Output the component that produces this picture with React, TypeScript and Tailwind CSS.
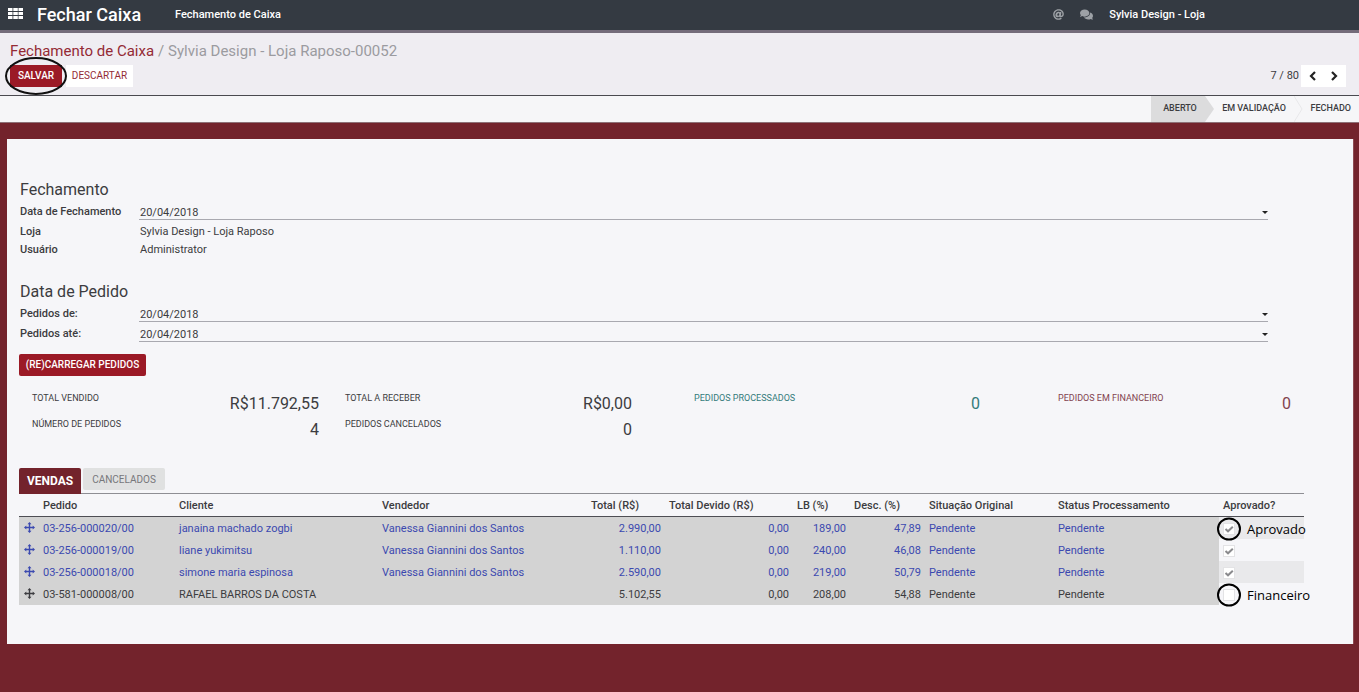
import React from "react";
import { FaAt, FaComments } from "react-icons/fa";

type Order = {
  id: string;
  client: string;
  seller: string;
  total: string;
  due: string;
  lb: string;
  discount: string;
  approved: boolean;
  note?: string;
};

const orders: Order[] = [
  { id: "03-256-000020/00", client: "janaina machado zogbi", seller: "Vanessa Giannini dos Santos", total: "2.990,00", due: "0,00", lb: "189,00", discount: "47,89", approved: true, note: "Aprovado" },
  { id: "03-256-000019/00", client: "liane yukimitsu", seller: "Vanessa Giannini dos Santos", total: "1.110,00", due: "0,00", lb: "240,00", discount: "46,08", approved: true },
  { id: "03-256-000018/00", client: "simone maria espinosa", seller: "Vanessa Giannini dos Santos", total: "2.590,00", due: "0,00", lb: "219,00", discount: "50,79", approved: true },
  { id: "03-581-000008/00", client: "RAFAEL BARROS DA COSTA", seller: "", total: "5.102,55", due: "0,00", lb: "208,00", discount: "54,88", approved: false, note: "Financeiro" },
];

const headers = ["Pedido", "Cliente", "Vendedor", "Total (R$)", "Total Devido (R$)", "LB (%)", "Desc. (%)", "Situação Original", "Status Processamento", "Aprovado?"];

function MoveIcon() {
  return (
    <svg viewBox="0 0 11 11" className="mx-auto h-[11px] w-[11px]" fill="currentColor" aria-hidden="true">
      <path d="M5.500 0 7.500 2.300H6.200V4.800H8.700V3.500L11 5.500 8.700 7.500V6.200H6.200V8.700H7.500L5.500 11 3.500 8.700H4.800V6.200H2.300V7.500L0 5.500 2.300 3.500V4.800H4.800V2.300H3.500z" />
    </svg>
  );
}

function Chevron({ d }: { d: string }) {
  return (
    <svg viewBox="0 0 8 10" className="h-2.5 w-2" fill="none" stroke="currentColor" strokeWidth="2.2" aria-hidden="true">
      <path d={d} />
    </svg>
  );
}

function DateField({ id, label }: { id: string; label: string }) {
  return (
    <div className="flex h-5 items-start">
      <label htmlFor={id} className="w-[119px] shrink-0 pt-0.5 leading-4 font-medium">{label}</label>
      <div className="flex h-[18px] min-w-0 flex-1 items-center border-b border-[#a9a9b0] pt-1">
        <input id={id} type="text" defaultValue="20/04/2018" className="min-w-0 flex-1 bg-transparent pl-px leading-[14px] outline-none" />
        <button type="button" aria-label={`Abrir calendário: ${label}`} className="flex h-3 w-1.5 items-center">
          <svg viewBox="0 0 6 3" className="h-[3px] w-1.5" fill="#222" aria-hidden="true"><path d="M0 0h6L3 3z" /></svg>
        </button>
      </div>
    </div>
  );
}

function TextField({ label, value }: { label: string; value: string }) {
  return (
    <div className="flex h-[18px] items-end leading-4">
      <span className="w-[119px] shrink-0 font-medium">{label}</span>
      <span className="pl-px">{value}</span>
    </div>
  );
}

function Stat({ label, value, tone = "" }: { label: string; value: string; tone?: string }) {
  return (
    <div className={`flex h-[26px] items-start justify-between ${tone}`}>
      <span className="text-[9px] leading-3">{label}</span>
      <span className="text-base leading-6">{value}</span>
    </div>
  );
}

export default function App() {
  return (
    <div className="flex min-h-screen flex-col bg-[#73232c] font-[Roboto,sans-serif] text-[11px] text-[#3c3c40]">
      <header className="flex h-[33px] items-center border-b-[3px] border-[#746c7a] bg-[#343a42] text-white">
        <button type="button" aria-label="Aplicativos" className="ml-2 w-[15px] pb-1">
          <svg viewBox="0 0 15 11" className="h-[11px] w-[15px]" fill="currentColor" aria-hidden="true">
            <path d="M0 0h4.500v3H0zM5.300 0h4.500v3H5.300zM10.500 0H15v3h-4.500zM0 4h4.500v3H0zM5.300 4h4.500v3H5.300zM10.500 4H15v3h-4.500zM0 8h4.500v3H0zM5.300 8h4.500v3H5.300zM10.500 8H15v3h-4.500z" />
          </svg>
        </button>
        <span className="ml-3.5 w-[138px] text-lg leading-6 font-medium">Fechar Caixa</span>
        <a href="#fechamento" className="flex-1 font-medium">Fechamento de Caixa</a>
        <div className="mr-[154px] flex items-center">
          <button type="button" aria-label="Menções" className="mr-4 pb-0.5 text-[#9da1a6]"><FaAt size={11} /></button>
          <button type="button" aria-label="Conversas" className="mr-4 pb-0.5 text-[#9da1a6]"><FaComments size={13} /></button>
          <a href="#usuario" className="font-medium">Sylvia Design - Loja</a>
        </div>
      </header>

      <section className="h-[63px] border-b border-[#4a4a50] bg-[#efedf2] pt-[9px] pr-[13px] pl-2.5">
        <nav className="flex text-[15px] leading-[18px]">
          <a href="#lista" className="text-[#942a35]">Fechamento de Caixa</a>
          <span className="w-3.5 pl-1 text-[#999]">/</span>
          <span className="text-[#9b9ba0]">Sylvia Design - Loja Raposo-00052</span>
        </nav>
        <div className="mt-[5px] flex h-[22px] items-stretch justify-between">
          <div className="flex text-[10px]">
            <div className="relative flex">
              <button type="button" className="w-[52px] bg-[#9b1a26] pb-px font-medium text-white">SALVAR</button>
              <svg viewBox="0 0 64 40" className="pointer-events-none absolute -top-[9px] -left-1.5 h-10 w-16 max-w-none" fill="none" stroke="#111" strokeWidth="2" aria-hidden="true">
                <ellipse cx="32" cy="20" rx="30" ry="18" />
              </svg>
            </div>
            <button type="button" className="ml-1 w-[67px] bg-white pb-px text-[#942a35]">DESCARTAR</button>
          </div>
          <div className="flex items-center">
            <span className="mr-0.5">7 / 80</span>
            <div className="flex h-[22px] w-[45px] items-center justify-around bg-white px-px text-[#222]">
              <button type="button" aria-label="Anterior"><Chevron d="M6 1 2 5l4 4" /></button>
              <button type="button" aria-label="Próximo"><Chevron d="m2 1 4 4-4 4" /></button>
            </div>
          </div>
        </div>
      </section>

      <div className="flex h-[27px] justify-end border-b border-[#8d7076] bg-[#f6f6f8] text-[9px] font-medium">
        <button type="button" className="w-[54px] bg-[#dcdcdd] pb-px pl-1">ABERTO</button>
        <svg viewBox="0 0 9 26" className="h-[26px] w-[9px]" aria-hidden="true"><path d="M0 0 9 13 0 26z" fill="#dcdcdd" /></svg>
        <button type="button" className="w-20 pb-px">EM VALIDAÇÃO</button>
        <svg viewBox="0 0 9 26" className="h-[26px] w-[9px]" aria-hidden="true"><path d="M0 0 8 13 0 26" fill="none" stroke="#e8e8ea" /></svg>
        <button type="button" className="w-14 pr-2 pb-px text-right">FECHADO</button>
      </div>

      <main className="mt-4 mr-[5px] mb-12 ml-[7px] border-r border-[#8d4a52] bg-[#f6f6f9] pt-[39px] pb-[39px] pl-3">
        <div className="mr-[85px] pl-px">
          <h2 className="text-base leading-6">Fechamento</h2>
          <DateField id="data-fechamento" label="Data de Fechamento" />
          <TextField label="Loja" value="Sylvia Design - Loja Raposo" />
          <TextField label="Usuário" value="Administrator" />
          <h2 className="mt-[22px] text-base leading-6">Data de Pedido</h2>
          <DateField id="pedidos-de" label="Pedidos de:" />
          <DateField id="pedidos-ate" label="Pedidos até:" />
        </div>

        <button type="button" className="mt-2.5 h-[22px] w-[127px] rounded-xs bg-[#9b1a26] pb-px text-[10px] font-medium text-white">(RE)CARREGAR PEDIDOS</button>

        <div className="mt-4 mr-[49px] grid grid-cols-[313fr_349fr_364fr_259fr]">
          <div className="px-[13px]">
            <Stat label="TOTAL VENDIDO" value="R$11.792,55" />
            <Stat label="NÚMERO DE PEDIDOS" value="4" />
          </div>
          <div className="pr-[49px] pl-[13px]">
            <Stat label="TOTAL A RECEBER" value="R$0,00" />
            <Stat label="PEDIDOS CANCELADOS" value="0" />
          </div>
          <div className="pr-[65px] pl-[13px]">
            <Stat label="PEDIDOS PROCESSADOS" value="0" tone="text-[#337b7b]" />
          </div>
          <div className="px-[13px]">
            <Stat label="PEDIDOS EM FINANCEIRO" value="0" tone="text-[#82434f]" />
          </div>
        </div>

        <div className="mt-6 mr-[49px]">
          <div className="flex h-[26px] items-start gap-0.5 border-b border-[#8e8e94]" role="tablist">
            <button type="button" role="tab" aria-selected="true" className="h-[26px] w-[62px] rounded-t-xs bg-[#73232c] text-xs font-bold text-white">VENDAS</button>
            <button type="button" role="tab" aria-selected="false" className="h-[22px] w-[82px] rounded-xs bg-[#e0e1e1] text-[10px] text-[#77777b]">CANCELADOS</button>
          </div>
          <table className="w-full table-fixed border-collapse text-left leading-[18px]">
            <colgroup>
              <col className="w-[20px]" /><col className="w-[136px]" /><col className="w-[203px]" /><col className="w-[209px]" />
              <col className="w-[78px]" /><col className="w-[128px]" /><col className="w-[57px]" /><col className="w-[75px]" />
              <col className="w-[129px]" /><col className="w-[165px]" /><col className="w-[85px]" />
            </colgroup>
            <thead>
              <tr className="h-[22px] border-b border-[#4e4e54]">
                <th aria-label="Ordenar" />
                {headers.map((h) => <th key={h} className="px-1 pt-0.5 font-medium whitespace-nowrap">{h}</th>)}
              </tr>
            </thead>
            <tbody>
              {orders.map((o, i) => (
                <tr key={o.id} className={`h-[22px] whitespace-nowrap ${o.approved ? "text-[#3b49b0]" : "text-[#3c3c40]"} [&>td:not(:last-child)]:bg-[#d3d3d3]`}>
                  <td><MoveIcon /></td>
                  <td className="px-1 pt-0.5">{o.id}</td>
                  <td className="px-1 pt-0.5">{o.client}</td>
                  <td className="px-1 pt-0.5">{o.seller}</td>
                  <td className="px-1 pt-0.5 text-right">{o.total}</td>
                  <td className="px-1 pt-0.5 text-right">{o.due}</td>
                  <td className="px-1 pt-0.5 text-right">{o.lb}</td>
                  <td className="px-1 pt-0.5 text-right">{o.discount}</td>
                  <td className="px-1 pt-0.5">Pendente</td>
                  <td className="px-1 pt-0.5">Pendente</td>
                  <td className={`pl-1 ${i % 2 === 0 ? "bg-[#e9e9eb]" : ""}`}>
                    <div className="relative flex h-[22px] items-center pt-0.5">
                      <input type="checkbox" defaultChecked={o.approved} aria-label={`Aprovado ${o.id}`} className="peer h-3 w-3 appearance-none border border-[#e3e3e5] bg-white" />
                      <svg viewBox="0 0 12 12" className="pointer-events-none absolute left-0 hidden h-3 w-3 peer-checked:block" fill="none" stroke="#8a8a8d" strokeWidth="2" aria-hidden="true">
                        <path d="M2.500 6 5 8.300 9.800 3.700" />
                      </svg>
                      {o.note && (
                        <>
                          <svg viewBox="0 0 26 26" className="pointer-events-none absolute -left-[7px] h-[26px] w-[26px] max-w-none" fill="none" stroke="#000" strokeWidth="2" aria-hidden="true">
                            <ellipse cx="13" cy="13" rx="11" ry="10.500" />
                          </svg>
                          <span className="absolute left-6 font-['Open_Sans',sans-serif] text-[13px] text-black">{o.note}</span>
                        </>
                      )}
                    </div>
                  </td>
                </tr>
              ))}
            </tbody>
          </table>
        </div>
      </main>
    </div>
  );
}
